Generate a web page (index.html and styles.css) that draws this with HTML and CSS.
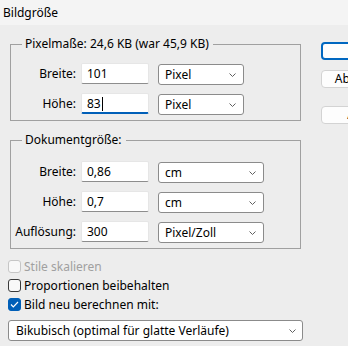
FILE: index.html
```html
<!DOCTYPE html>
<html lang="de">
<head>
    <meta charset="UTF-8">
    <meta name="viewport" content="width=device-width, initial-scale=1.0">
    <title>Bildgröße</title>
    <link rel="stylesheet" href="styles.css">
</head>
<body>
    <div class="titlebar">Bildgröße</div>
    <div class="dialog">
        <div class="main">
            <fieldset class="group group-pixel">
                <legend>Pixelmaße: 24,6 KB (war 45,9 KB)</legend>
                <div class="row">
                    <span class="label">Breite:</span>
                    <div class="field">101</div>
                    <div class="select select-short">
                        <span>Pixel</span>
                        <svg class="chevron" width="7" height="4" viewBox="0 0 7 4"><polyline points="0.5,0.5 3.5,3.5 6.5,0.5"/></svg>
                    </div>
                </div>
                <div class="row">
                    <span class="label">Höhe:</span>
                    <div class="field field-focus">83<span class="caret"></span></div>
                    <div class="select select-short">
                        <span>Pixel</span>
                        <svg class="chevron" width="7" height="4" viewBox="0 0 7 4"><polyline points="0.5,0.5 3.5,3.5 6.5,0.5"/></svg>
                    </div>
                </div>
            </fieldset>

            <fieldset class="group group-doc">
                <legend>Dokumentgröße:</legend>
                <div class="row">
                    <span class="label">Breite:</span>
                    <div class="field">0,86</div>
                    <div class="select select-mid">
                        <span>cm</span>
                        <svg class="chevron" width="7" height="4" viewBox="0 0 7 4"><polyline points="0.5,0.5 3.5,3.5 6.5,0.5"/></svg>
                    </div>
                </div>
                <div class="row">
                    <span class="label">Höhe:</span>
                    <div class="field">0,7</div>
                    <div class="select select-mid">
                        <span>cm</span>
                        <svg class="chevron" width="7" height="4" viewBox="0 0 7 4"><polyline points="0.5,0.5 3.5,3.5 6.5,0.5"/></svg>
                    </div>
                </div>
                <div class="row">
                    <span class="label">Auflösung:</span>
                    <div class="field">300</div>
                    <div class="select select-mid">
                        <span>Pixel/Zoll</span>
                        <svg class="chevron" width="7" height="4" viewBox="0 0 7 4"><polyline points="0.5,0.5 3.5,3.5 6.5,0.5"/></svg>
                    </div>
                </div>
            </fieldset>

            <div class="checks">
                <div class="check check-disabled"><span class="box"></span>Stile skalieren</div>
                <div class="check"><span class="box"></span>Proportionen beibehalten</div>
                <div class="check"><span class="box box-checked"><svg width="9" height="7" viewBox="0 0 9 7"><polyline points="1,3.5 3.3,5.8 8,1"/></svg></span>Bild neu berechnen mit:</div>
            </div>

            <div class="select select-wide">
                <span>Bikubisch (optimal für glatte Verläufe)</span>
                <svg class="chevron" width="7" height="4" viewBox="0 0 7 4"><polyline points="0.5,0.5 3.5,3.5 6.5,0.5"/></svg>
            </div>
        </div>

        <div class="buttons">
            <button class="btn btn-default">OK</button>
            <button class="btn">Abbrechen</button>
            <button class="btn btn-auto">Auto...</button>
        </div>
    </div>
</body>
</html>
```

FILE: styles.css
```css
/* Grundlayout */
html, body {
    margin: 0;
    padding: 0;
    overflow: hidden;
}
body {
    width: 348px;
    height: 346px;
    background-color: #ededed;
    font-family: "Noto Sans", "Open Sans", sans-serif;
    font-size: 12px;
    color: #000;
}
.titlebar {
    height: 25px;
    line-height: 25px;
    padding-left: 3px;
    background-color: #f4f4f4;
}
.dialog {
    display: flex;
    padding-left: 8px;
}
.main {
    width: 295px;
    flex-shrink: 0;
    padding-top: 11px;
}

/* Gruppen */
.group {
    box-sizing: border-box;
    width: 291px;
    margin: 0 0 0 2px;
    padding: 0 0 6px 11px;
    border: 1px solid #a0a0a0;
    min-width: 0;
}
.group legend {
    margin-left: 0;
    padding: 0 4px 0 3px;
    line-height: 16px;
}
.group-pixel {
    padding-top: 11px;
}
.group-doc {
    margin-top: 11px;
    padding-top: 13px;
}
.row {
    display: flex;
    align-items: flex-start;
    height: 21px;
    margin-bottom: 9px;
}
.row:last-child {
    margin-bottom: 0;
}
.label {
    width: 65px;
    margin-left: -11px;
    text-align: right;
    line-height: 21px;
    white-space: nowrap;
}
.field {
    box-sizing: border-box;
    width: 68px;
    height: 21px;
    margin-left: 5px;
    padding-left: 5px;
    line-height: 19px;
    background-color: #fff;
    border: 1px solid #e6e6e6;
    border-bottom-color: #8d8d8d;
    border-radius: 2px;
}
.field-focus {
    border-bottom: 2px solid #005fb8;
}
.caret {
    display: inline-block;
    width: 1px;
    height: 14px;
    margin-left: 1px;
    background-color: #000;
    vertical-align: -3px;
}

/* Auswahlfelder */
.select {
    box-sizing: border-box;
    display: flex;
    align-items: center;
    justify-content: space-between;
    height: 21px;
    padding: 0 7px 0 6px;
    background-color: #fff;
    border: 1px solid #8b8b8b;
    border-radius: 3px;
    white-space: nowrap;
}
.row .select {
    margin-left: 9px;
    margin-top: 1px;
}
.select-short {
    width: 86px;
}
.select-mid {
    width: 106px;
}
.select-wide {
    width: 295px;
    margin-top: 6px;
    padding: 0 6px 0 7px;
}
.chevron {
    fill: none;
    stroke: #606060;
    stroke-width: 1;
}

/* Kontrollkästchen */
.checks {
    margin-top: 8px;
}
.check {
    display: flex;
    align-items: center;
    height: 19px;
}
.box {
    box-sizing: border-box;
    display: flex;
    align-items: center;
    justify-content: center;
    width: 13px;
    height: 13px;
    margin-right: 3px;
    border: 1px solid #3a3a3a;
    border-radius: 3px;
    background-color: #f8f8f8;
}
.check-disabled {
    color: #a0a0a0;
}
.check-disabled .box {
    border-color: #c6c6c6;
}
.box-checked {
    background-color: #005fb8;
    border-color: #005fb8;
}
.box-checked svg {
    fill: none;
    stroke: #fff;
    stroke-width: 1.2;
}

/* Schaltflächen */
.buttons {
    display: flex;
    flex-direction: column;
    margin-left: 18px;
    padding-top: 17px;
}
.btn {
    box-sizing: border-box;
    flex-shrink: 0;
    width: 89px;
    height: 18px;
    padding: 0;
    font-family: inherit;
    font-size: 12px;
    line-height: 16px;
    color: #000;
    background-color: #fdfdfd;
    border: 1px solid #d3d3d3;
    border-radius: 4px;
    margin-bottom: 10px;
}
.btn-default {
    border: 2px solid #0067c0;
}
.btn-auto {
    margin-top: 8px;
}
```
